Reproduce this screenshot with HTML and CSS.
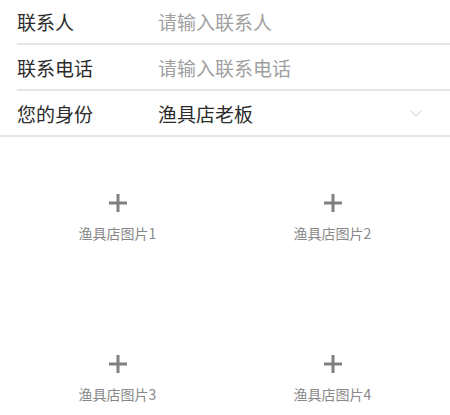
FILE: index.html
```html
<!DOCTYPE html>
<html lang="zh-CN">
  <head>
    <meta charset="UTF-8" />
    <meta name="viewport" content="width=device-width, initial-scale=1.0" />
    <title>渔具店信息</title>
    <link rel="stylesheet" href="styles.css">
  </head>
  <body>
    <div class="form-list">
      <div class="form-row">
        <span class="label">联系人</span>
        <input class="field" type="text" placeholder="请输入联系人" />
      </div>
      <div class="form-row">
        <span class="label">联系电话</span>
        <input class="field" type="tel" placeholder="请输入联系电话" />
      </div>
      <div class="form-row">
        <span class="label">您的身份</span>
        <span class="value">渔具店老板</span>
        <svg class="chevron" width="12" height="7" viewBox="0 0 12 7">
          <polyline points="0.5,0.5 6,6 11.5,0.5" fill="none" stroke="#c8c8c8" stroke-width="1" />
        </svg>
      </div>
    </div>

    <div class="photo-grid">
      <div class="photo-cell">
        <svg class="plus" width="20" height="20" viewBox="0 0 20 20">
          <path d="M10 1v18M1 10h18" stroke="#808080" stroke-width="3" />
        </svg>
        <span class="photo-label">渔具店图片1</span>
      </div>
      <div class="photo-cell">
        <svg class="plus" width="20" height="20" viewBox="0 0 20 20">
          <path d="M10 1v18M1 10h18" stroke="#808080" stroke-width="3" />
        </svg>
        <span class="photo-label">渔具店图片2</span>
      </div>
      <div class="photo-cell">
        <svg class="plus" width="20" height="20" viewBox="0 0 20 20">
          <path d="M10 1v18M1 10h18" stroke="#808080" stroke-width="3" />
        </svg>
        <span class="photo-label">渔具店图片3</span>
      </div>
      <div class="photo-cell">
        <svg class="plus" width="20" height="20" viewBox="0 0 20 20">
          <path d="M10 1v18M1 10h18" stroke="#808080" stroke-width="3" />
        </svg>
        <span class="photo-label">渔具店图片4</span>
      </div>
    </div>
  </body>
</html>
```

FILE: styles.css
```css
body {
  font-family: "Noto Sans CJK SC", "Noto Sans", sans-serif;
  color: #333;
  margin: 0;
  background-color: white;
  overflow: hidden;
}
.form-list {
  margin-top: -1px;
  padding-left: 17px;
  border-bottom: 2px solid #e6e6e6;
}
.form-row {
  display: flex;
  align-items: center;
  height: 44px;
  border-bottom: 2px solid #e6e6e6;
}
.form-row:last-child {
  border-bottom: none;
}
.label {
  width: 141px;
  font-size: 19px;
  color: #2b2b2b;
}
.field {
  flex: 1;
  border: none;
  outline: none;
  padding: 0;
  font-family: inherit;
  font-size: 19px;
  color: #333;
  background: transparent;
}
.field::placeholder {
  color: #a0a0a0;
}
.value {
  flex: 1;
  font-size: 19px;
  color: #2b2b2b;
}
.chevron {
  margin-right: 28px;
}
.photo-grid {
  display: grid;
  grid-template-columns: 1fr 1fr;
  padding: 0 10px;
}
.photo-cell {
  aspect-ratio: 4 / 3;
  display: flex;
  flex-direction: column;
  align-items: center;
  justify-content: center;
  gap: 10px;
}
.photo-label {
  font-size: 14px;
  line-height: 20px;
  color: #888;
}
```
